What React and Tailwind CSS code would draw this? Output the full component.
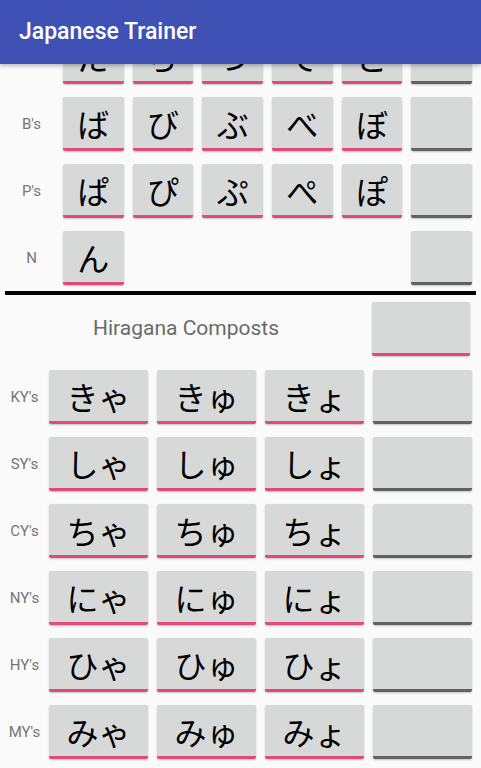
import React from 'react';

// rows of the basic table (first one is half hidden under the toolbar)
const basicRows = [
    { label: "D's", kana: ['だ', 'ぢ', 'づ', 'で', 'ど'] },
    { label: "B's", kana: ['ば', 'び', 'ぶ', 'べ', 'ぼ'] },
    { label: "P's", kana: ['ぱ', 'ぴ', 'ぷ', 'ぺ', 'ぽ'] },
    { label: 'N', kana: ['ん'] },
];

const compostRows = [
    { label: "KY's", kana: ['きゃ', 'きゅ', 'きょ'] },
    { label: "SY's", kana: ['しゃ', 'しゅ', 'しょ'] },
    { label: "CY's", kana: ['ちゃ', 'ちゅ', 'ちょ'] },
    { label: "NY's", kana: ['にゃ', 'にゅ', 'にょ'] },
    { label: "HY's", kana: ['ひゃ', 'ひゅ', 'ひょ'] },
    { label: "MY's", kana: ['みゃ', 'みゅ', 'みょ'] },
];

function KanaButton({ text, answer }) {
    const line = answer ? 'border-[#616161]' : 'border-[#e4477b]';
    return (
        <div
            className={`h-[54px] rounded-[2px] bg-[#d7d8d8] border-b-[3px] ${line} shadow-[0_1px_2px_rgba(0,0,0,0.22)] flex items-center justify-center text-[32px] leading-none text-black font-['Noto_Sans_CJK_JP',sans-serif]`}
        >
            {text}
        </div>
    );
}

function RowLabel({ children, width }) {
    return (
        <div className={`${width} shrink-0 text-center text-[15px] text-[#757575] font-['Roboto',sans-serif]`}>
            {children}
        </div>
    );
}

export default function App() {
    return (
        <div className="h-screen overflow-hidden bg-[#fafafa]">
            {/* toolbar */}
            <div className="relative z-10 h-16 bg-[#3f51b5] shadow-[0_2px_4px_rgba(0,0,0,0.25)] flex items-center pl-[19px]">
                <h1 className="text-white text-[23px] font-medium font-['Roboto',sans-serif]">Japanese Trainer</h1>
            </div>

            <div className="-mt-[34px] flex flex-col">
                {/* basic table */}
                <div className="flex flex-col gap-[13px]">
                    {basicRows.map((row) => (
                        <div key={row.label} className="flex items-center">
                            <RowLabel width="w-[63px]">{row.label}</RowLabel>
                            <div className="flex-1 grid grid-cols-6 gap-[9px] pr-[9px]">
                                {[0, 1, 2, 3, 4].map((i) =>
                                    row.kana[i] ? <KanaButton key={i} text={row.kana[i]} /> : <div key={i} />
                                )}
                                <KanaButton answer />
                            </div>
                        </div>
                    ))}
                </div>

                <div className="mt-[6px] mx-[5px] h-[4px] bg-black" />

                {/* compost header */}
                <div className="mt-[7px] flex items-center">
                    <div className="flex-1 text-center text-[21px] text-[#6a6a6a] font-['Roboto',sans-serif]">
                        Hiragana Composts
                    </div>
                    <div className="w-[98px] mr-[11px]">
                        <KanaButton />
                    </div>
                </div>

                {/* compost table */}
                <div className="mt-[14px] flex flex-col gap-[13px]">
                    {compostRows.map((row) => (
                        <div key={row.label} className="flex items-center">
                            <RowLabel width="w-[49px]">{row.label}</RowLabel>
                            <div className="flex-1 grid grid-cols-4 gap-[9px] pr-[9px]">
                                {row.kana.map((k) => (
                                    <KanaButton key={k} text={k} />
                                ))}
                                <KanaButton answer />
                            </div>
                        </div>
                    ))}
                </div>
            </div>
        </div>
    );
}
